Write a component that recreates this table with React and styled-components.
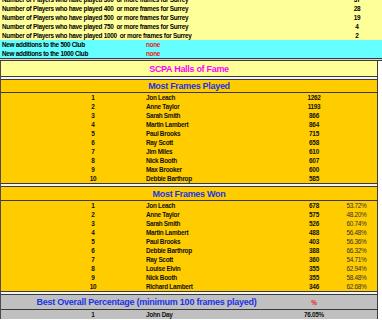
import React from "react";
import styled, { createGlobalStyle } from "styled-components";

const FONT = `"Liberation Sans", Arial, sans-serif`;

const GlobalStyle = createGlobalStyle`
  html, body { margin: 0; padding: 0; background: #ffffff; }
  body { font-family: ${FONT}; }
`;

const Sheet = styled.div`
  width: 382px;
  margin-top: -5px;
  overflow: hidden;
  font-family: ${FONT};
`;

const StatRow = styled.div`
  display: grid;
  grid-template-columns: 335px 44px 1fr;
  height: 9px;
  line-height: 9px;
  background: #ffff99;
  font-size: 6.4px;
  letter-spacing: -0.28px;
  font-weight: 700;
  color: #000;
`;

const StatLabel = styled.span`
  padding-left: 2px;
  white-space: pre;
  overflow: hidden;
`;

const StatValue = styled.span`
  text-align: center;
`;

const ClubRow = styled.div`
  display: grid;
  grid-template-columns: 146px 1fr;
  height: 9px;
  line-height: 9px;
  background: #66ffff;
  font-size: 6.4px;
  letter-spacing: -0.28px;
  font-weight: 700;
  color: #000;
`;

const ClubNote = styled.span`
  color: #ee1111;
`;

const Divider = styled.div`
  box-sizing: border-box;
  height: ${(p) => p.$h || 4}px;
  border-top: 1px solid #3a3a3a;
  border-bottom: 1px solid #3a3a3a;
  background: ${(p) => p.$fill || "#f4f4f4"};
`;

const Panel = styled.div`
  box-sizing: border-box;
  width: 378px;
  border-left: 1px solid #4a4a4a;
  border-right: 1px solid #3a3a3a;
`;

const Banner = styled.div`
  display: flex;
  align-items: center;
  justify-content: center;
  height: ${(p) => p.$h}px;
  background: ${(p) => p.$bg};
  color: ${(p) => p.$color};
  font-size: 9px;
  letter-spacing: -0.3px;
  font-weight: 700;
  border-bottom: ${(p) => (p.$line ? "1px solid #3a3a3a" : "none")};
`;

const DataRow = styled.div`
  display: grid;
  grid-template-columns: 59px 66px 20px 146px 44px 41px;
  align-items: center;
  height: ${(p) => p.$h || 9}px;
  line-height: 9px;
  background: ${(p) => p.$bg};
  font-size: 6.4px;
  letter-spacing: -0.28px;
  font-weight: 700;
  color: #111;
  border-bottom: ${(p) => (p.$line ? "1px solid #3a3a3a" : "none")};
`;

const Cell = styled.span`
  grid-column: ${(p) => p.$col};
  text-align: ${(p) => p.$align || "center"};
  white-space: nowrap;
  overflow: hidden;
  color: ${(p) => p.$color || "inherit"};
  font-weight: ${(p) => p.$weight || 700};
`;

const HeadCell = styled(Cell)`
  font-size: 9px;
  letter-spacing: -0.25px;
  line-height: 12px;
`;

const stats = [
  ["300", "37"],
  ["400", "28"],
  ["500", "19"],
  ["750", "4"],
  ["1000", "2"],
];

const played = [
  ["Jon Leach", "1262"],
  ["Anne Taylor", "1193"],
  ["Sarah Smith", "866"],
  ["Martin Lambert", "864"],
  ["Paul Brooks", "715"],
  ["Ray Scott", "658"],
  ["Jim Miles", "610"],
  ["Nick Booth", "607"],
  ["Max Brooker", "600"],
  ["Debbie Barthrop", "585"],
];

const won = [
  ["Jon Leach", "678", "53.72%"],
  ["Anne Taylor", "575", "48.20%"],
  ["Sarah Smith", "526", "60.74%"],
  ["Martin Lambert", "488", "56.48%"],
  ["Paul Brooks", "403", "56.36%"],
  ["Debbie Barthrop", "388", "66.32%"],
  ["Ray Scott", "360", "54.71%"],
  ["Louise Elvin", "355", "62.94%"],
  ["Nick Booth", "355", "58.48%"],
  ["Richard Lambert", "346", "62.68%"],
];

const ORANGE = "#ffcc00";
const BLUE = "#1a33e6";

export default function App() {
  return (
    <>
      <GlobalStyle />
      <Sheet>
        {stats.map(([n, v]) => (
          <StatRow key={n}>
            <StatLabel>{`Number of Players who have played ${n}  or more frames for Surrey`}</StatLabel>
            <StatValue>{v}</StatValue>
          </StatRow>
        ))}
        <ClubRow>
          <StatLabel>New additions to the 500 Club</StatLabel>
          <ClubNote>none</ClubNote>
        </ClubRow>
        <ClubRow>
          <StatLabel>New additions to the 1000 Club</StatLabel>
          <ClubNote>none</ClubNote>
        </ClubRow>
        <Divider $h={3} $fill="#d8d8d8" />
        <Panel>
          <Banner $h={15} $bg="#ffff99" $color="#ff00ff">SCPA Halls of Fame</Banner>
          <Divider />
          <Banner $h={12} $bg={ORANGE} $color={BLUE} $line>Most Frames Played</Banner>
          {played.map(([name, frames], i) => (
            <DataRow key={name} $bg={ORANGE}>
              <Cell $col={2}>{i + 1}</Cell>
              <Cell $col={4} $align="left">{name}</Cell>
              <Cell $col={5}>{frames}</Cell>
            </DataRow>
          ))}
          <Divider />
          <Banner $h={13} $bg={ORANGE} $color={BLUE} $line>Most Frames Won</Banner>
          {won.map(([name, frames, pct], i) => (
            <DataRow key={name + i} $bg={ORANGE}>
              <Cell $col={2}>{i + 1}</Cell>
              <Cell $col={4} $align="left">{name}</Cell>
              <Cell $col={5}>{frames}</Cell>
              <Cell $col={6} $weight={400} $color="#333">{pct}</Cell>
            </DataRow>
          ))}
          <Divider />
          <DataRow $bg="#c0c0c0" $h={14} $line>
            <HeadCell $col="1 / 5" $color={BLUE}>
              Best Overall Percentage (minimum 100 frames played)
            </HeadCell>
            <Cell $col={5} $color="#ee1111">%</Cell>
          </DataRow>
          <DataRow $bg="#c0c0c0">
            <Cell $col={2}>1</Cell>
            <Cell $col={4} $align="left">John Day</Cell>
            <Cell $col={5}>76.05%</Cell>
          </DataRow>
        </Panel>
      </Sheet>
    </>
  );
}
